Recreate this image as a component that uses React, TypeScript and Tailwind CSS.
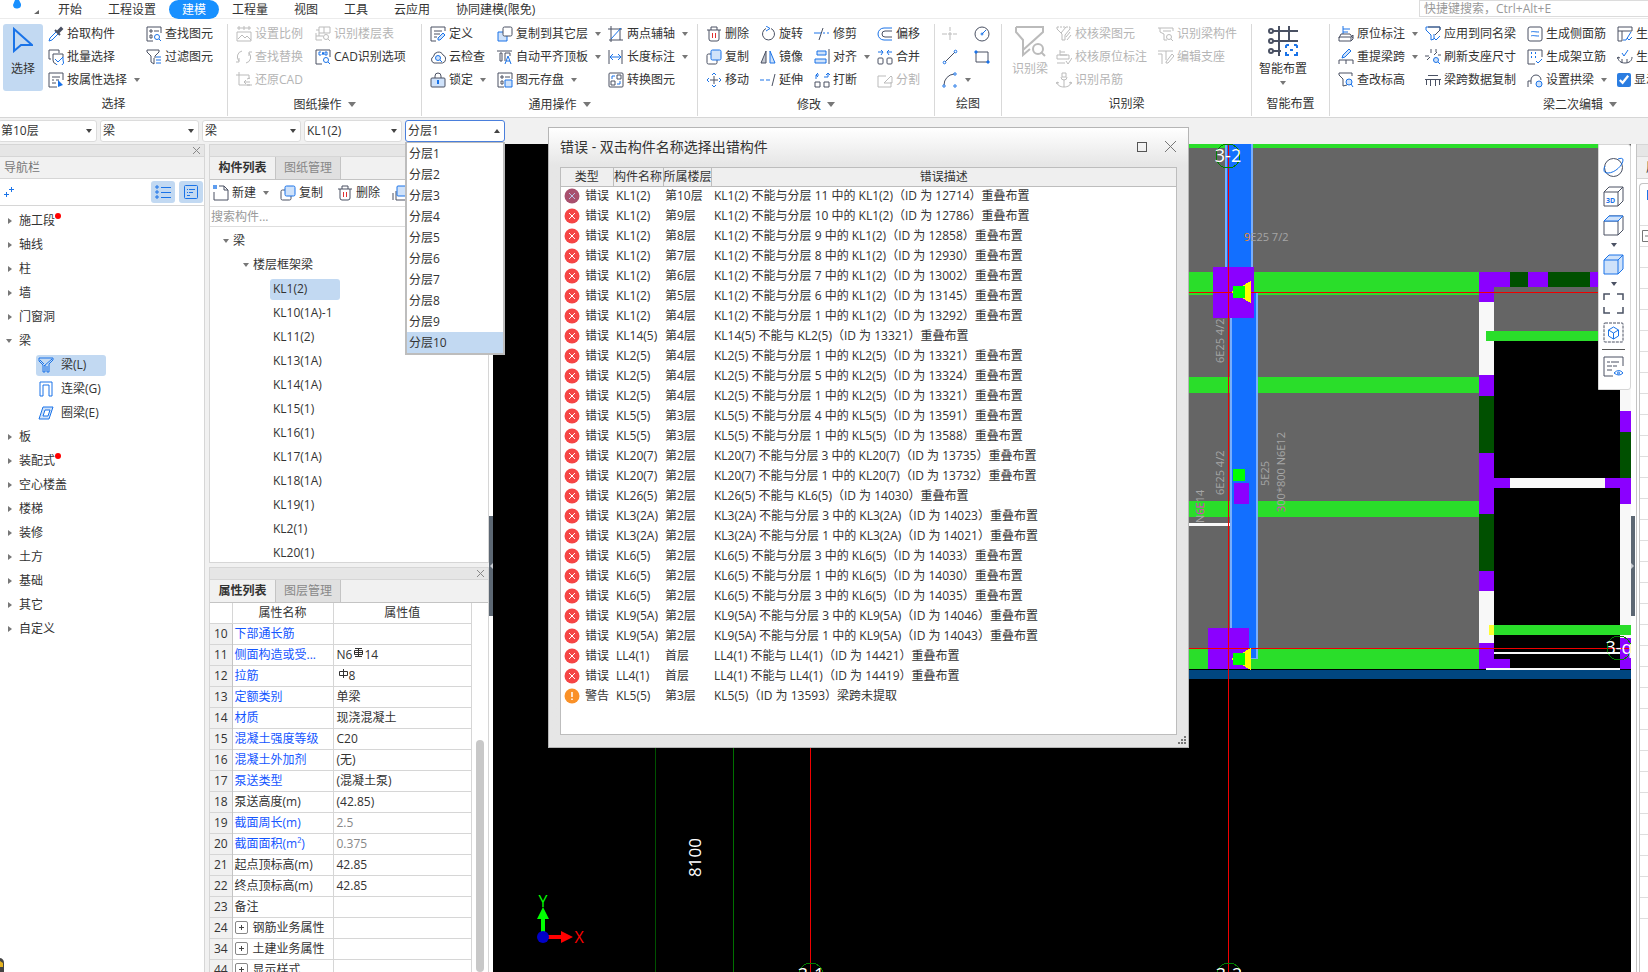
import { useState } from "react";
import type { ReactNode } from "react";
import clsx from "clsx";

const BLUE = "#1a73e8";
const PALE = "#cfe2fa";

const icons: Record<string, ReactNode> = {
  pick: (
    <>
      <path d="M8 6L2 12l-1 3 3-1 6-6" stroke={BLUE} />
      <path d="M10 5l3-3 1 1-3 3z" fill="currentColor" strokeWidth="2" />
      <path d="M7 4l5 5" strokeWidth="2" />
    </>
  ),
  batch: (
    <>
      <path d="M3 10H1V1h10v3" />
      <path d="M15 8V5H5v6a4 4 0 0 0 3 4" />
      <path d="M15 8v3a4 4 0 0 1-7 4M7 10l3 3 5-5" stroke={BLUE} />
    </>
  ),
  byProp: (
    <>
      <path d="M9 15H1V1h14v7M4 5h8M4 8h2M8 8h3M4 11h4" />
      <path d="M10 8l5 5-5 2z" fill={BLUE} stroke="none" />
    </>
  ),
  find: (
    <>
      <path d="M7 15H1V1h14v6M4 4h2v2H4zM8 5h5M4 9h2v3H4z" />
      <circle cx="11" cy="11" r="2.5" stroke={BLUE} />
      <path d="M13 13l2 2" stroke={BLUE} />
    </>
  ),
  filter: (
    <>
      <path d="M1 1h12v2L9 7v2M1 1v2l4 4v6l3 2V9" />
      <path d="M10 8h5M10 11h5M10 14h5" stroke={BLUE} />
    </>
  ),
  scale: <path d="M1 2h14M3 0v4M8 0v4M13 0v4M1 6h14v9H1zM2 13l4-4 3 3 2-2 4 4" />,
  floors: (
    <>
      <path d="M4 1v9M1 4h3M4 1h11v6H4M9 1v6M1 10h7M1 7v7h6" />
      <circle cx="11" cy="11" r="2.5" />
      <path d="M13 13l2 2" />
    </>
  ),
  replace: <path d="M6 2a6 6 0 0 0-3 10M3 9v4H0M10 14a6 6 0 0 0 3-10M13 7V3h3" />,
  cad: (
    <>
      <path d="M7 15H1V1h14v7" />
      <path d="M6 3H4v3h2M7 6l1-3 1 3M10 3h2v3h-2z" stroke={BLUE} />
      <circle cx="11" cy="11" r="2.5" stroke={BLUE} />
      <path d="M13 13l2 2" stroke={BLUE} />
    </>
  ),
  restore: <path d="M3 0v13h13M0 3h13v4M8 10h6M10 8l-2 2 2 2M11 7l3-1M11 13h3" />,
  define: (
    <>
      <path d="M6 15H1V1h14v4M4 5h8M4 8h6M4 11h3" />
      <path d="M8 12l5-5 2 2-5 5H8z" fill={PALE} stroke={BLUE} />
    </>
  ),
  copyFloor: (
    <>
      <path d="M6 6H1v9h9v-5" fill={PALE} stroke={BLUE} />
      <rect x="6" y="1" width="9" height="9" rx="1.5" fill="white" />
    </>
  ),
  axis: (
    <>
      <path d="M3 0v16M0 3h14M1 14h14M12 2v12" />
      <path d="M3 13L13 2" stroke={BLUE} />
    </>
  ),
  cloud: (
    <>
      <path d="M4 14a3.5 3.5 0 0 1-.5-6.500A5 5 0 0 1 13 6a4.200 4.200 0 0 1-.5 8z" />
      <circle cx="8" cy="9" r="2.500" stroke={BLUE} fill={PALE} />
      <path d="M10 11l2 2" stroke={BLUE} />
    </>
  ),
  alignTop: (
    <>
      <path d="M0 2h15M3 4v8h2V4zM8 12V4h5v3" />
      <path d="M8 15l3-8 3 8M9 12h4" stroke={BLUE} />
    </>
  ),
  length: (
    <>
      <path d="M1 1v14M14 1v14" />
      <path d="M2 8h11M5 5L2 8l3 3M10 5l3 3-3 3" stroke={BLUE} />
    </>
  ),
  lock: (
    <>
      <path d="M5 6V4a3 3 0 0 1 6 0v2" />
      <rect x="1" y="6" width="14" height="9" rx="1" fill={PALE} />
      <path d="M8 8v4" stroke={BLUE} strokeWidth="2" />
    </>
  ),
  save: (
    <>
      <path d="M7 15H1V1h14v6M4 4h2v2H4zM8 5h5M4 9h2v3H4z" />
      <path d="M8 8h7v7H8z" fill={PALE} stroke={BLUE} />
    </>
  ),
  convert: (
    <>
      <rect x="1" y="1" width="14" height="14" rx="1" />
      <path d="M9 3h4v4H9zM3 9h4v4H3z" />
      <path d="M4 7V4h3M12 9v3H9" stroke={BLUE} />
    </>
  ),
  trash: (
    <>
      <path d="M1 4h14M5 4V1h6v3M3 4v9a2 2 0 0 0 2 2h6a2 2 0 0 0 2-2V4" />
      <path d="M6.500 7v5M9.500 7v5" stroke="#e03131" />
    </>
  ),
  copy: (
    <>
      <rect x="1" y="5" width="10" height="10" rx="1.500" />
      <rect x="5" y="1" width="10" height="10" rx="1.500" fill={PALE} stroke={BLUE} />
    </>
  ),
  move: (
    <>
      <path d="M8 4v8M4 8h8" />
      <path d="M6 3l2-2 2 2M6 13l2 2 2-2M3 6L1 8l2 2M13 6l2 2-2 2" stroke={BLUE} />
    </>
  ),
  rotate: (
    <>
      <path d="M6 2.500a6 6 0 1 0 5 0" />
      <path d="M6 0l4 2.500-4 2.500" stroke={BLUE} />
    </>
  ),
  mirror: (
    <>
      <path d="M6 2v12H1z" fill="#c4c8d0" />
      <path d="M10 2v12h5z" stroke={BLUE} fill={PALE} />
    </>
  ),
  extend: (
    <>
      <path d="M15 2l-3 12" />
      <path d="M0 8h4M6 8h4" stroke={BLUE} />
    </>
  ),
  trim: (
    <>
      <path d="M9 2L5 14" />
      <path d="M0 7h7" stroke={BLUE} />
      <path d="M9 7h2M13 7h2" stroke={BLUE} />
    </>
  ),
  align: (
    <>
      <path d="M15 0v15" />
      <path d="M3 2h9v4H3zM1 10h11v4H1z" stroke={BLUE} fill={PALE} />
    </>
  ),
  breakUp: (
    <>
      <path d="M1 10h5v5H1zM10 10h5v5h-5z" />
      <path d="M2 7V3h3M4 1L2 3l2 2M10 5h4V2M12 3l2-2 2 2" stroke={BLUE} />
    </>
  ),
  offset: (
    <>
      <path d="M15 2H7a6 6 0 0 0 0 12h8" stroke={BLUE} />
      <path d="M15 5H8a3 3 0 0 0 0 6h7" />
    </>
  ),
  merge: (
    <>
      <rect x="1" y="9" width="5" height="6" rx="1" />
      <rect x="10" y="9" width="5" height="6" rx="1" />
      <path d="M1 3h5M4 1l2 2-2 3M15 3h-5M12 1l-2 2 2 3" stroke={BLUE} />
    </>
  ),
  split: <path d="M9 4H1v11h13v-5M7 11l7-7 1 1v6z" />,
  point: <path d="M8 1v4M8 10v4M0 8h5M11 8h4M7 7h2v2H7z" />,
  circle: (
    <>
      <circle cx="8" cy="8" r="7" />
      <path d="M8 8l4-4" stroke={BLUE} />
      <circle cx="8" cy="8" r="1" stroke={BLUE} />
    </>
  ),
  line: (
    <>
      <path d="M3 13L13 3" />
      <circle cx="2.500" cy="13.500" r="1.300" stroke={BLUE} />
      <circle cx="13.500" cy="2.500" r="1.300" stroke={BLUE} />
    </>
  ),
  rect: (
    <>
      <path d="M2 3h12v10H2z" />
      <path d="M1 2h2v2H1zM13 12h2v2h-2z" stroke={BLUE} fill={BLUE} />
    </>
  ),
  arc: (
    <>
      <path d="M2 13A11 11 0 0 1 12 2" />
      <circle cx="2" cy="14" r="1.200" stroke={BLUE} />
      <circle cx="13" cy="2" r="1.200" stroke={BLUE} />
      <circle cx="13" cy="14" r="1.200" stroke={BLUE} />
    </>
  ),
  checkBeam: (
    <>
      <path d="M1 1h13" strokeDasharray="2 1" />
      <path d="M1 1v2l5 5v6h3V9l5-6V1M10 1L5 7M14 6l-4 5M15 9l-4 5" />
    </>
  ),
  checkMark: <path d="M4 1v5h7M4 3h5M1 6h12v4H1zM1 14h8M10 12l2 3 4-6" />,
  hanger: (
    <path d="M8 8v7M6 1h4v4H6zM5 5a3 3 0 0 0 3 3 3 3 0 0 0 3-3M1 10c0 3 3 5 7 5s7-2 7-5M0 12l1-2 2 1M16 12l-1-2-2 1" />
  ),
  beamPart: (
    <>
      <path d="M0 2h15v3M2 2v4l4 2v6h3M5 5h8" />
      <circle cx="11" cy="11" r="2.500" />
      <path d="M13 13l2 2" />
    </>
  ),
  support: <path d="M0 2h15M0 5h4v10M8 2v9M8 13l6-8 2 2-6 7H8z" />,
  mark: (
    <>
      <path d="M5 8V0M5 3h7M5 6h5" stroke={BLUE} />
      <path d="M1 12l2-4h9l3 4M1 11h12v4H1zM13 11l2-2v4l-2 2" />
    </>
  ),
  respan: (
    <>
      <path d="M1 15v-4h14v4M8 11v4" />
      <path d="M4 9l1-3 6-6 2 2-6 6z" fill={PALE} stroke={BLUE} />
    </>
  ),
  elevation: (
    <>
      <path d="M1 1h13v3M1 1v2l4 4v7l4-1" />
      <circle cx="11" cy="10" r="3" stroke={BLUE} fill={PALE} />
      <path d="M13 12l2 3" stroke={BLUE} />
    </>
  ),
  applyBeam: (
    <>
      <path d="M1 1h14v3l-3 3M1 1v3l5 5v5l3-1V8" stroke={BLUE} />
      <path d="M3 1h12v3l-5 5" />
      <path d="M9 12l2 2 4-4" stroke={BLUE} />
    </>
  ),
  refresh: (
    <>
      <path d="M0 7h4M6 0v4M12 3L9 6M2 11l3-3M11 0v3M13 6h3" />
      <circle cx="11" cy="11" r="2.500" stroke={BLUE} fill={PALE} />
      <path d="M13 13l2 2" stroke={BLUE} />
    </>
  ),
  spanCopy: <path d="M3 3.500h10M0 7.500h16M1.500 8v5M5.500 8v6M10.500 8v6M14.500 8v5" />,
  sideBar: (
    <>
      <rect x="1" y="1" width="14" height="14" rx="2" />
      <path d="M4 6c2-1 3 0 8 0M4 10c2-1 3 0 8 0" stroke={BLUE} />
    </>
  ),
  topBar: (
    <>
      <path d="M8 15H1V1h14v7" />
      <path d="M4 4h1M8 4h1M4 8h1M8 8h1" stroke={BLUE} strokeWidth="2" />
      <path d="M9 12l2 2 4-4" stroke={BLUE} />
    </>
  ),
  arch: (
    <>
      <path d="M1 15v-6h3M4 12V8a5 5 0 0 1 10 0" />
      <circle cx="12" cy="12" r="3" stroke={BLUE} fill={PALE} />
    </>
  ),
  genA: (
    <>
      <path d="M1 1h14v4H1zM1 5v10h4V5" />
      <path d="M6 14l3 0 5-8M10 12l2 2 3-3" stroke={BLUE} />
    </>
  ),
  genB: (
    <>
      <path d="M1 8c0 4 3 6 7 6s7-2 7-6M0 10l1-2 2 1M5 10v4M10 10v4" />
      <path d="M5 4l2 3 4-6" stroke={BLUE} />
    </>
  ),
  newDoc: (
    <>
      <path d="M6 1h5l4 4v10H1V7M11 1v4h4" />
      <path d="M0 0h4v4H0z" fill={BLUE} stroke="none" opacity="0.7" />
    </>
  ),
  layers: (
    <>
      <path d="M4 6v9h9M1 8v7" />
      <rect x="5" y="1" width="10" height="10" rx="1" fill={PALE} stroke={BLUE} />
    </>
  ),
  beam: <path d="M1 1h14v2l-4 4v8H9V9M1 1v3l4 4v7h2V8M2 3l4 4M14 2L6 9" stroke={BLUE} />,
  linkBeam: <path d="M2 15V1h12v14h-3V4H5v11z" stroke={BLUE} />,
  ringBeam: <path d="M5 2h10l-4 12H1zM7 5h5l-2 6H5z" stroke={BLUE} fill={PALE} fillRule="evenodd" />,
};

function Icon({ name, className }: { name: string; className?: string }) {
  return (
    <svg
      viewBox="0 0 16 16"
      fill="none"
      stroke="currentColor"
      className={clsx("h-4 w-4 shrink-0", className)}
    >
      {icons[name]}
    </svg>
  );
}

function Caret({ up, className }: { up?: boolean; className?: string }) {
  return (
    <svg viewBox="0 0 6 4" className={clsx("h-1 w-1.5 shrink-0", className)}>
      <path d={up ? "M0 4L3 0l3 4z" : "M0 0h6L3 4z"} fill="currentColor" />
    </svg>
  );
}

interface ToolDef {
  icon: string;
  text?: string;
  arrow?: boolean;
  off?: boolean;
}

function Tool({ icon, text, arrow, off }: ToolDef) {
  return (
    <button
      type="button"
      disabled={off}
      aria-label={text ?? icon}
      className={clsx(
        "flex h-[23px] items-center gap-[3px] whitespace-nowrap",
        off ? "text-[#b5b5b5]" : "text-[#333]"
      )}
    >
      <Icon name={icon} className={off ? "text-[#bbb]" : "text-[#4a5163]"} />
      {text}
      {arrow && <Caret className="ml-1 text-[#777]" />}
    </button>
  );
}

function Tools({ items, className }: { items: ToolDef[]; className: string }) {
  return (
    <div className={clsx("shrink-0", className)}>
      {items.map((t) => (
        <Tool key={t.icon} {...t} />
      ))}
    </div>
  );
}

interface GroupProps {
  label: string;
  more?: boolean;
  className: string;
  children: ReactNode;
}

function Group({ label, more, className, children }: GroupProps) {
  return (
    <section className={clsx("flex shrink-0 flex-col", className)}>
      <div className="flex h-[71px]">{children}</div>
      <div
        className={clsx(
          "flex items-center justify-center gap-1.5 whitespace-nowrap",
          more ? "h-[23px] pr-2" : "h-[27px]"
        )}
      >
        {label}
        {more && (
          <svg viewBox="0 0 8 5" className="h-[5px] w-2 shrink-0" fill="#777">
            <path d="M0 0h8L4 5z" />
          </svg>
        )}
      </div>
    </section>
  );
}

function Divider() {
  return <div className="mt-0.5 h-[92px] w-px shrink-0 bg-[#d9d9d9]" />;
}

const MENUS = ["开始", "工程设置", "建模", "工程量", "视图", "工具", "云应用", "协同建模(限免)"];

function MenuBar() {
  return (
    <header className="flex h-[19px] shrink-0 items-start border-b border-[#ececec] bg-white">
      <div className="flex w-[45px] shrink-0 pl-3">
        <svg viewBox="0 0 10 11" className="h-[11px] w-2.5">
          <path d="M3 0h4l2 4a4 4 0 1 1-8 1z" fill="#1890ff" />
        </svg>
        <svg viewBox="0 0 5 4" className="mt-2.5 ml-3 h-1 w-[5px]">
          <path d="M5 0v4H0z" fill="#666" />
        </svg>
      </div>
      <nav className="flex">
        {MENUS.map((m) => (
          <button
            key={m}
            type="button"
            className={clsx(
              "h-[19px] px-[13px] whitespace-nowrap",
              m === "建模" && "rounded-full bg-[#1890ff] text-white"
            )}
          >
            {m}
          </button>
        ))}
      </nav>
      <div className="ml-auto w-[229px] overflow-hidden">
        <input
          aria-label="快捷键搜索"
          placeholder="快捷键搜索，Ctrl+Alt+E"
          className="h-[17px] w-[260px] border border-[#dcdcdc] px-1 placeholder:text-[#999]"
        />
      </div>
    </header>
  );
}

function Ribbon() {
  return (
    <div className="flex h-[99px] shrink-0 overflow-hidden border-b border-[#d6d6d6] bg-white pt-[3px]">
      <Group label="选择" className="w-[227px]">
        <button
          type="button"
          className="mt-0.5 mr-[5px] ml-[3px] flex h-[67px] w-10 shrink-0 flex-col items-center rounded-[3px] bg-[#c2d9f2]"
        >
          <svg viewBox="0 0 20 26" className="mt-[3px] h-[26px] w-5" fill="none" stroke={BLUE} strokeWidth="2">
            <path d="M1 2v22l7-6h11z" />
          </svg>
          <span className="mt-2">选择</span>
        </button>
        <Tools
          className="w-[98px]"
          items={[
            { icon: "pick", text: "拾取构件" },
            { icon: "batch", text: "批量选择" },
            { icon: "byProp", text: "按属性选择", arrow: true },
          ]}
        />
        <Tools
          className="w-[70px]"
          items={[
            { icon: "find", text: "查找图元" },
            { icon: "filter", text: "过滤图元" },
          ]}
        />
      </Group>
      <Divider />
      <Group label="图纸操作" more className="w-[193px] pl-2">
        <Tools
          className="w-[79px]"
          items={[
            { icon: "scale", text: "设置比例", off: true },
            { icon: "replace", text: "查找替换", off: true },
            { icon: "restore", text: "还原CAD", off: true },
          ]}
        />
        <Tools
          className="w-[100px]"
          items={[
            { icon: "floors", text: "识别楼层表", off: true },
            { icon: "cad", text: "CAD识别选项" },
          ]}
        />
      </Group>
      <Divider />
      <Group label="通用操作" more className="w-[275px] pl-2">
        <Tools
          className="w-[67px]"
          items={[
            { icon: "define", text: "定义" },
            { icon: "cloud", text: "云检查" },
            { icon: "lock", text: "锁定", arrow: true },
          ]}
        />
        <Tools
          className="w-[111px]"
          items={[
            { icon: "copyFloor", text: "复制到其它层", arrow: true },
            { icon: "alignTop", text: "自动平齐顶板", arrow: true },
            { icon: "save", text: "图元存盘", arrow: true },
          ]}
        />
        <Tools
          className="w-[85px]"
          items={[
            { icon: "axis", text: "两点辅轴", arrow: true },
            { icon: "length", text: "长度标注", arrow: true },
            { icon: "convert", text: "转换图元" },
          ]}
        />
      </Group>
      <Divider />
      <Group label="修改" more className="w-[236px] pl-2">
        <Tools
          className="w-[54px]"
          items={[
            { icon: "trash", text: "删除" },
            { icon: "copy", text: "复制" },
            { icon: "move", text: "移动" },
          ]}
        />
        <Tools
          className="w-[54px]"
          items={[
            { icon: "rotate", text: "旋转" },
            { icon: "mirror", text: "镜像" },
            { icon: "extend", text: "延伸" },
          ]}
        />
        <Tools
          className="w-[63px]"
          items={[
            { icon: "trim", text: "修剪" },
            { icon: "align", text: "对齐", arrow: true },
            { icon: "breakUp", text: "打断" },
          ]}
        />
        <Tools
          className="w-[50px]"
          items={[
            { icon: "offset", text: "偏移" },
            { icon: "merge", text: "合并" },
            { icon: "split", text: "分割", off: true },
          ]}
        />
      </Group>
      <Divider />
      <Group label="绘图" className="w-[66px] px-[7px]">
        <Tools
          className="w-8"
          items={[{ icon: "point", off: true }, { icon: "line" }, { icon: "arc", arrow: true }]}
        />
        <Tools className="w-5" items={[{ icon: "circle" }, { icon: "rect" }]} />
      </Group>
      <Divider />
      <Group label="识别梁" className="w-[249px]">
        <button
          type="button"
          disabled
          className="mr-2 ml-2.5 flex w-9 shrink-0 flex-col items-center whitespace-nowrap text-[#b5b5b5]"
        >
          <svg viewBox="0 0 32 32" className="mt-[3px] h-8 w-8" fill="none" stroke="#bbb" strokeWidth="2">
            <path d="M2 2h27v5L17 18M2 2v5l7 8v15l7-6M29 7L9 25" />
            <circle cx="24" cy="24" r="5" />
            <path d="M27 27l4 4" />
          </svg>
          <span className="mt-1">识别梁</span>
        </button>
        <Tools
          className="w-[102px]"
          items={[
            { icon: "checkBeam", text: "校核梁图元", off: true },
            { icon: "checkMark", text: "校核原位标注", off: true },
            { icon: "hanger", text: "识别吊筋", off: true },
          ]}
        />
        <Tools
          className="w-[82px]"
          items={[
            { icon: "beamPart", text: "识别梁构件", off: true },
            { icon: "support", text: "编辑支座", off: true },
          ]}
        />
      </Group>
      <Divider />
      <Group label="智能布置" className="w-[77px]">
        <button type="button" className="ml-[7px] flex w-12 shrink-0 flex-col items-center whitespace-nowrap">
          <svg viewBox="0 0 32 32" className="mt-[3px] h-8 w-8" fill="none" stroke="#4a5163" strokeWidth="2">
            <path d="M5 6h26M5 16h26M5 26h9M12 1v30M22 1v15" />
            <g fill="white">
              <circle cx="4" cy="6" r="2" />
              <circle cx="4" cy="16" r="2" />
              <circle cx="4" cy="26" r="2" />
            </g>
            <rect x="17" y="18" width="15" height="14" fill="white" stroke="none" />
            <path d="M22 20h-2l-1 1v2M27 20h2l1 1v2M19 27v3h3M30 27v3h-3M23 25h3" stroke={BLUE} />
          </svg>
          <span className="mt-1">智能布置</span>
          <Caret className="mt-1 text-[#777]" />
        </button>
      </Group>
      <Divider />
      <Group label="梁二次编辑" more className="w-[500px] pl-2">
        <Tools
          className="w-[87px]"
          items={[
            { icon: "mark", text: "原位标注", arrow: true },
            { icon: "respan", text: "重提梁跨", arrow: true },
            { icon: "elevation", text: "查改标高" },
          ]}
        />
        <Tools
          className="w-[102px]"
          items={[
            { icon: "applyBeam", text: "应用到同名梁" },
            { icon: "refresh", text: "刷新支座尺寸" },
            { icon: "spanCopy", text: "梁跨数据复制" },
          ]}
        />
        <Tools
          className="w-[90px]"
          items={[
            { icon: "sideBar", text: "生成侧面筋" },
            { icon: "topBar", text: "生成架立筋" },
            { icon: "arch", text: "设置拱梁", arrow: true },
          ]}
        />
        <div className="w-[120px] shrink-0">
          <Tool icon="genA" text="生成梁加腋" />
          <Tool icon="genB" text="生成吊筋" />
          <label className="flex h-[23px] items-center gap-[3px] whitespace-nowrap">
            <input type="checkbox" defaultChecked className="h-3.5 w-3.5 accent-[#2b7de1]" />
            显示吊筋
          </label>
        </div>
      </Group>
    </div>
  );
}

const LAYERS = Array.from({ length: 10 }, (_, i) => `分层${i + 1}`);

interface PickerProps {
  label: string;
  options: string[];
  open?: boolean;
  className: string;
}

function Picker({ label, options, open, className }: PickerProps) {
  const [value, setValue] = useState(options[0]);
  return (
    <div className={clsx("relative shrink-0", className)}>
      <select
        aria-label={label}
        value={value}
        onChange={(e) => setValue(e.target.value)}
        className={clsx(
          "h-[22px] w-full appearance-none rounded-[3px] border bg-white px-0.5 leading-5",
          open ? "border-[#4a7fdc]" : "border-[#dcdcdc]"
        )}
      >
        {options.map((o) => (
          <option key={o}>{o}</option>
        ))}
      </select>
      <Caret up={open} className="pointer-events-none absolute top-[9px] right-[5px] text-[#444]" />
      {open && (
        <ul
          role="listbox"
          aria-label={label}
          className="absolute top-[22px] left-0 z-20 w-full border-2 border-t border-[#bdbdbd] bg-white"
        >
          {options.map((o, i) => (
            <li
              key={o}
              role="option"
              aria-selected={o === value}
              className={clsx(
                "h-[21px] px-0.5 leading-[21px]",
                i === options.length - 1 && "bg-[#c2d9f2]"
              )}
            >
              {o}
            </li>
          ))}
        </ul>
      )}
    </div>
  );
}

function ContextBar() {
  return (
    <div className="flex h-[26px] shrink-0 gap-[3px] bg-[#f1f1f1] pt-0.5">
      <Picker label="楼层" options={["第10层"]} className="-ml-0.5 w-[99px]" />
      <Picker label="构件大类" options={["梁"]} className="w-[99px]" />
      <Picker label="构件类型" options={["梁"]} className="w-[99px]" />
      <Picker label="构件" options={["KL1(2)"]} className="w-[98px]" />
      <Picker label="分层" options={LAYERS} open className="w-[100px]" />
    </div>
  );
}

function CaptionBar() {
  return (
    <div className="flex h-[13px] shrink-0 items-center justify-end border-y border-[#d6d6d6] bg-[#e6e6e6] pr-1">
      <button type="button" aria-label="关闭">
        <svg viewBox="0 0 7 7" className="h-[7px] w-[7px]" stroke="#888">
          <path d="M0 0l7 7M7 0L0 7" />
        </svg>
      </button>
    </div>
  );
}

function TreeArrow({ open }: { open?: boolean }) {
  return (
    <svg viewBox="0 0 8 8" className="h-2 w-2 shrink-0" fill="#777">
      <path d={open ? "M1 2h6L4 6z" : "M3 1l4 3-4 3z"} />
    </svg>
  );
}

const NAV_ITEMS: { text: string; dot?: boolean; children?: [string, string][] }[] = [
  { text: "施工段", dot: true },
  { text: "轴线" },
  { text: "柱" },
  { text: "墙" },
  { text: "门窗洞" },
  {
    text: "梁",
    children: [
      ["beam", "梁(L)"],
      ["linkBeam", "连梁(G)"],
      ["ringBeam", "圈梁(E)"],
    ],
  },
  { text: "板" },
  { text: "装配式", dot: true },
  { text: "空心楼盖" },
  { text: "楼梯" },
  { text: "装修" },
  { text: "土方" },
  { text: "基础" },
  { text: "其它" },
  { text: "自定义" },
];

function NavPanel() {
  return (
    <aside className="flex w-[205px] shrink-0 flex-col border-r border-[#d6d6d6] bg-white">
      <CaptionBar />
      <h2 className="h-[22px] shrink-0 border-b border-[#d6d6d6] bg-[#f1f1f1] px-1 leading-[21px] text-[#777]">
        导航栏
      </h2>
      <div className="flex h-[27px] shrink-0 items-center gap-1 border-b border-[#d6d6d6] pr-px pl-1">
        <svg viewBox="0 0 10 10" className="mr-auto h-2.5 w-2.5" stroke={BLUE}>
          <path d="M0 7.500h5M2.500 5v5M5 2.500h5M7.500 0v5" />
        </svg>
        <button type="button" aria-label="列表" className="flex h-[22px] w-6 items-center justify-center rounded-[3px] bg-[#c2d9f2]">
          <svg viewBox="0 0 16 14" className="h-3.5 w-4" fill="none" stroke={BLUE}>
            <path d="M1 1h2v2H1zM1 6h2v2H1zM1 11h2v2H1zM6 2.500h10M6 7.500h10M6 12.500h10" />
          </svg>
        </button>
        <button type="button" aria-label="详情" className="flex h-[22px] w-6 items-center justify-center rounded-[3px] bg-[#c2d9f2]">
          <svg viewBox="0 0 16 16" className="h-4 w-4" fill="none" stroke={BLUE}>
            <rect x="1.500" y="1.500" width="13" height="13" rx="1" />
            <path d="M4 5.500h1M6 5.500h6M4 8.500h1M6 8.500h4M4 11.500h3" />
          </svg>
        </button>
      </div>
      <ul className="pt-[3px]">
        {NAV_ITEMS.map((n) => (
          <li key={n.text}>
            <div className="flex h-6 items-center gap-1.5 pl-[5px]">
              <TreeArrow open={!!n.children} />
              {n.text}
              {n.dot && <span className="-mt-2.5 -ml-1.5 h-1.5 w-1.5 rounded-full bg-[#ff0000]" />}
            </div>
            {n.children?.map(([icon, text], i) => (
              <div key={text} className="flex h-6 items-center pl-9">
                <button
                  type="button"
                  className={clsx(
                    "flex h-[21px] w-[70px] items-center gap-[7px] rounded-[3px] pl-0.5",
                    i === 0 && "bg-[#c2d9f2]"
                  )}
                >
                  <Icon name={icon} />
                  {text}
                </button>
              </div>
            ))}
          </li>
        ))}
      </ul>
      <svg viewBox="0 0 5 14" className="mt-auto h-3.5 w-[5px]">
        <path d="M0 0a5 5 0 0 1 4 5v9H0z" fill="#444" />
        <path d="M0 3l3 2v4H0z" fill="#e6b422" />
      </svg>
    </aside>
  );
}

function PanelTabs({ tabs }: { tabs: [string, string] }) {
  return (
    <div role="tablist" className="flex h-[23px] shrink-0 border-b border-[#c4c4c4] bg-[#f1f1f1]">
      <button role="tab" aria-selected="true" type="button" className="w-[65px] font-bold">
        {tabs[0]}
      </button>
      <button
        role="tab"
        aria-selected="false"
        type="button"
        className="w-[66px] border-x border-[#c4c4c4] bg-[#e0e0e0] text-[#888]"
      >
        {tabs[1]}
      </button>
    </div>
  );
}

const COMPONENTS = [
  "KL1(2)", "KL10(1A)-1", "KL11(2)", "KL13(1A)", "KL14(1A)", "KL15(1)",
  "KL16(1)", "KL17(1A)", "KL18(1A)", "KL19(1)", "KL2(1)", "KL20(1)",
];

function ComponentPanel() {
  return (
    <section className="flex h-[419px] shrink-0 flex-col overflow-hidden border-x border-b border-[#d6d6d6] bg-white">
      <CaptionBar />
      <PanelTabs tabs={["构件列表", "图纸管理"]} />
      <div className="flex h-[27px] shrink-0 items-center overflow-hidden border-b border-[#dedede] pl-[3px]">
        <Tools className="w-[67px]" items={[{ icon: "newDoc", text: "新建", arrow: true }]} />
        <Tools className="w-[57px]" items={[{ icon: "copy", text: "复制" }]} />
        <Tools className="w-[55px]" items={[{ icon: "trash", text: "删除" }]} />
        <Tools className="w-5" items={[{ icon: "layers" }]} />
      </div>
      <input
        aria-label="搜索构件"
        placeholder="搜索构件..."
        className="h-5 shrink-0 border-b border-[#dedede] px-px placeholder:text-[#999]"
      />
      <ul className="pt-0.5">
        <li className="flex h-6 items-center gap-[3px] pl-3">
          <TreeArrow open />梁
        </li>
        <li className="flex h-6 items-center gap-[3px] pl-8">
          <TreeArrow open />
          楼层框架梁
        </li>
        {COMPONENTS.map((c, i) => (
          <li key={c} className="flex h-6 items-center pl-[60px]">
            <span
              className={clsx(
                "h-[21px] w-[70px] rounded-[3px] px-[3px] leading-5 whitespace-nowrap",
                i === 0 && "bg-[#c2d9f2]"
              )}
            >
              {c}
            </span>
          </li>
        ))}
      </ul>
    </section>
  );
}

type Tone = "link" | "muted" | "group";

const PROPS: [number, string, ReactNode, Tone?][] = [
  [10, "下部通长筋", "", "link"],
  [11, "侧面构造或受...", <>N6<Rebar grade={3} />14</>, "link"],
  [12, "拉筋", <><Rebar grade={1} />8</>, "link"],
  [13, "定额类别", "单梁", "link"],
  [14, "材质", "现浇混凝土", "link"],
  [15, "混凝土强度等级", "C20", "link"],
  [16, "混凝土外加剂", "(无)", "link"],
  [17, "泵送类型", "(混凝土泵)", "link"],
  [18, "泵送高度(m)", "(42.85)"],
  [19, "截面周长(m)", "2.5", "muted"],
  [20, "截面面积(m²)", "0.375", "muted"],
  [21, "起点顶标高(m)", "42.85"],
  [22, "终点顶标高(m)", "42.85"],
  [23, "备注", ""],
  [24, "钢筋业务属性", "", "group"],
  [34, "土建业务属性", "", "group"],
  [44, "显示样式", "", "group"],
];

// steel grade mark: grade 1 has a single bar, grade 3 has three
function Rebar({ grade }: { grade: 1 | 3 }) {
  return (
    <svg viewBox="0 0 12 10" className="-mt-1 inline h-2.5 w-3" fill="none" stroke="#333">
      <path
        d={
          grade === 1
            ? "M2.500 2.500h8v4h-8zM6.500 0v9"
            : "M2.500 2.500h8v4h-8zM6.500 0v9M2.500 4.500h8M3 .5h7M3 8.500h7"
        }
      />
    </svg>
  );
}

function PropertyPanel() {
  return (
    <section className="mt-1 flex min-h-0 flex-1 flex-col overflow-hidden border-x border-[#d6d6d6] bg-white">
      <CaptionBar />
      <PanelTabs tabs={["属性列表", "图层管理"]} />
      <div className="flex min-h-0 flex-1 overflow-hidden">
        <div className="min-w-0 flex-1 overflow-hidden">
          <table className="w-full table-fixed border-collapse">
            <colgroup>
              <col className="w-[22px]" />
              <col className="w-[101px]" />
              <col />
            </colgroup>
            <thead>
              <tr className="h-5 border-b border-[#d6d6d6]">
                <th className="border-r border-[#d6d6d6]" />
                <th className="border-r border-[#d6d6d6] p-0 font-normal">属性名称</th>
                <th className="border-r border-[#d6d6d6] p-0 font-normal">属性值</th>
              </tr>
            </thead>
            <tbody>
              {PROPS.map(([no, name, value, tone]) => (
                <tr key={no} className="h-[21px] border-b border-[#d6d6d6] whitespace-nowrap">
                  <td className="border-r border-[#c4c4c4] bg-[#f1f1f1] p-0 text-center">{no}</td>
                  <td
                    className={clsx(
                      "border-r border-[#d6d6d6] p-0 pl-0.5",
                      (tone === "link" || tone === "muted") && "text-[#1456ff]"
                    )}
                  >
                    {tone === "group" ? (
                      <span className="flex items-center gap-[5px]">
                        <button
                          type="button"
                          aria-label={`展开${name}`}
                          className="flex h-[13px] w-[13px] items-center justify-center rounded-[2px] border border-[#888]"
                        >
                          <svg viewBox="0 0 5 5" className="h-[5px] w-[5px]" stroke="#444">
                            <path d="M0 2.500h5M2.500 0v5" />
                          </svg>
                        </button>
                        {name}
                      </span>
                    ) : (
                      name
                    )}
                  </td>
                  <td
                    className={clsx(
                      "border-r border-[#d6d6d6] p-0 pl-[3px]",
                      tone === "muted" && "text-[#888]"
                    )}
                  >
                    {value}
                  </td>
                </tr>
              ))}
            </tbody>
          </table>
        </div>
        <div className="w-4 shrink-0 px-1 pt-[137px]">
          <div className="h-full rounded-full bg-[#c8c8c8]" />
        </div>
      </div>
    </section>
  );
}

type ErrorRow = [name: string, floor: string, text: string];

const ERRORS: ErrorRow[] = [
  ["KL1(2)", "第10层", "KL1(2) 不能与分层 11 中的 KL1(2)（ID 为 12714）重叠布置"],
  ["KL1(2)", "第9层", "KL1(2) 不能与分层 10 中的 KL1(2)（ID 为 12786）重叠布置"],
  ["KL1(2)", "第8层", "KL1(2) 不能与分层 9 中的 KL1(2)（ID 为 12858）重叠布置"],
  ["KL1(2)", "第7层", "KL1(2) 不能与分层 8 中的 KL1(2)（ID 为 12930）重叠布置"],
  ["KL1(2)", "第6层", "KL1(2) 不能与分层 7 中的 KL1(2)（ID 为 13002）重叠布置"],
  ["KL1(2)", "第5层", "KL1(2) 不能与分层 6 中的 KL1(2)（ID 为 13145）重叠布置"],
  ["KL1(2)", "第4层", "KL1(2) 不能与分层 1 中的 KL1(2)（ID 为 13292）重叠布置"],
  ["KL14(5)", "第4层", "KL14(5) 不能与 KL2(5)（ID 为 13321）重叠布置"],
  ["KL2(5)", "第4层", "KL2(5) 不能与分层 1 中的 KL2(5)（ID 为 13321）重叠布置"],
  ["KL2(5)", "第4层", "KL2(5) 不能与分层 5 中的 KL2(5)（ID 为 13324）重叠布置"],
  ["KL2(5)", "第4层", "KL2(5) 不能与分层 1 中的 KL2(5)（ID 为 13321）重叠布置"],
  ["KL5(5)", "第3层", "KL5(5) 不能与分层 4 中的 KL5(5)（ID 为 13591）重叠布置"],
  ["KL5(5)", "第3层", "KL5(5) 不能与分层 1 中的 KL5(5)（ID 为 13588）重叠布置"],
  ["KL20(7)", "第2层", "KL20(7) 不能与分层 3 中的 KL20(7)（ID 为 13735）重叠布置"],
  ["KL20(7)", "第2层", "KL20(7) 不能与分层 1 中的 KL20(7)（ID 为 13732）重叠布置"],
  ["KL26(5)", "第2层", "KL26(5) 不能与 KL6(5)（ID 为 14030）重叠布置"],
  ["KL3(2A)", "第2层", "KL3(2A) 不能与分层 3 中的 KL3(2A)（ID 为 14023）重叠布置"],
  ["KL3(2A)", "第2层", "KL3(2A) 不能与分层 1 中的 KL3(2A)（ID 为 14021）重叠布置"],
  ["KL6(5)", "第2层", "KL6(5) 不能与分层 3 中的 KL6(5)（ID 为 14033）重叠布置"],
  ["KL6(5)", "第2层", "KL6(5) 不能与分层 1 中的 KL6(5)（ID 为 14030）重叠布置"],
  ["KL6(5)", "第2层", "KL6(5) 不能与分层 3 中的 KL6(5)（ID 为 14035）重叠布置"],
  ["KL9(5A)", "第2层", "KL9(5A) 不能与分层 3 中的 KL9(5A)（ID 为 14046）重叠布置"],
  ["KL9(5A)", "第2层", "KL9(5A) 不能与分层 1 中的 KL9(5A)（ID 为 14043）重叠布置"],
  ["LL4(1)", "首层", "LL4(1) 不能与 LL4(1)（ID 为 14421）重叠布置"],
  ["LL4(1)", "首层", "LL4(1) 不能与 LL4(1)（ID 为 14419）重叠布置"],
  ["KL5(5)", "第3层", "KL5(5)（ID 为 13593）梁跨未提取"],
];

function ErrorDialog() {
  return (
    <div
      role="dialog"
      aria-label="错误"
      className="absolute -top-[17px] left-[55px] z-10 flex h-[621px] w-[641px] flex-col border border-[#b5b5b5] bg-[#e6e6e6] bg-linear-to-b from-white via-[#e6e6e6] via-6% to-[#e6e6e6] px-[11px] pb-3"
    >
      <div className="flex h-[39px] shrink-0 items-center pb-0.5">
        <h2 className="mr-auto text-sm">错误 - 双击构件名称选择出错构件</h2>
        <button type="button" aria-label="最大化" className="mr-[18px] h-2.5 w-2.5 border border-[#555]" />
        <button type="button" aria-label="关闭" className="mr-px">
          <svg viewBox="0 0 11 11" className="h-[11px] w-[11px]" stroke="#777">
            <path d="M0 0l11 11M11 0L0 11" />
          </svg>
        </button>
      </div>
      <div className="min-h-0 flex-1 overflow-hidden border border-[#bdbdbd] bg-white">
        <table className="w-full table-fixed border-collapse">
          <colgroup>
            <col className="w-[52px]" />
            <col className="w-[50px]" />
            <col className="w-[48px]" />
            <col />
          </colgroup>
          <thead>
            <tr className="h-[18px] border-b border-[#bdbdbd] bg-[#efefef] leading-4 whitespace-nowrap">
              <th className="border-r border-[#bdbdbd] p-0 font-normal">类型</th>
              <th className="border-r border-[#bdbdbd] p-0 font-normal">构件名称</th>
              <th className="border-r border-[#bdbdbd] p-0 font-normal">所属楼层</th>
              <th className="p-0 font-normal">错误描述</th>
            </tr>
          </thead>
          <tbody>
            {ERRORS.map(([name, floor, text], i) => {
              const warn = i === ERRORS.length - 1;
              return (
                <tr key={i} className="h-5 whitespace-nowrap">
                  <td className="p-0 pl-[3px]">
                    <span className="flex items-center gap-[5px]">
                      <svg viewBox="0 0 16 16" className="h-4 w-4 shrink-0" stroke="white" fill="none">
                        <circle
                          cx="8"
                          cy="8"
                          r="7.500"
                          stroke="none"
                          fill={warn ? "#fa9128" : i === 0 ? "#a8506e" : "#f54545"}
                        />
                        {warn ? (
                          <path d="M8 4v5M8 10.500v1.500" strokeWidth="1.500" />
                        ) : (
                          <path d="M5 5l6 6M11 5l-6 6" stroke={i === 0 ? "#b9c4e6" : "white"} />
                        )}
                      </svg>
                      {warn ? "警告" : "错误"}
                    </span>
                  </td>
                  <td className="p-0 pl-[3px]">{name}</td>
                  <td className="p-0 pl-0.5">{floor}</td>
                  <td className="p-0 pl-[3px]">{text}</td>
                </tr>
              );
            })}
          </tbody>
        </table>
      </div>
      <svg viewBox="0 0 8 8" className="absolute right-0.5 bottom-[3px] h-2 w-2" fill="#777">
        <path d="M6 0h2v2H6zM3 3h2v2H3zM6 3h2v2H6zM0 6h2v2H0zM3 6h2v2H3zM6 6h2v2H6z" />
      </svg>
    </div>
  );
}

const VIOLET = "#8b00ff";
const GREEN = "#2ade2a";
const FOREST = "#005000";
const WALL = "#f8f8f8";

// [x, y, width, height, fill], painted in order
const SHAPES: [number, number, number, number, string][] = [
  [507, 0, 631, 525, "#656565"],
  [507, 0, 598, 4, GREEN],
  [507, 128, 479, 23, GREEN],
  [507, 233, 479, 16, GREEN],
  [507, 357, 487, 16, GREEN],
  [507, 505, 479, 20, GREEN],
  [507, 379, 231, 3, WALL],
  [1001, 197, 126, 328, "#000000"],
  [986, 128, 31, 15, VIOLET],
  [1017, 128, 18, 15, FOREST],
  [1035, 128, 20, 15, VIOLET],
  [1055, 128, 42, 15, FOREST],
  [1097, 128, 10, 15, VIOLET],
  [986, 143, 15, 15, VIOLET],
  [986, 158, 15, 73, WALL],
  [986, 231, 15, 21, VIOLET],
  [986, 252, 15, 57, FOREST],
  [986, 309, 15, 61, VIOLET],
  [986, 370, 15, 57, FOREST],
  [986, 427, 15, 20, VIOLET],
  [986, 447, 15, 52, WALL],
  [986, 499, 15, 26, VIOLET],
  [1001, 515, 16, 10, VIOLET],
  [993, 187, 145, 10, GREEN],
  [1127, 197, 11, 70, WALL],
  [1127, 267, 11, 21, VIOLET],
  [1127, 288, 11, 46, FOREST],
  [1001, 334, 16, 10, VIOLET],
  [1017, 334, 95, 10, WALL],
  [1112, 334, 26, 10, VIOLET],
  [1127, 344, 11, 16, VIOLET],
  [1127, 360, 11, 134, WALL],
  [1127, 494, 11, 31, VIOLET],
  [1001, 481, 137, 10, GREEN],
  [996, 481, 5, 10, "#ffff30"],
  [1001, 508, 126, 2, WALL],
  [993, 524, 134, 2, WALL],
  [507, 526, 631, 9, "#004680"],
  [732, 0, 28, 124, "#78aefc"],
  [734, 0, 24, 124, "#126fff"],
  [737, 148, 28, 367, "#78aefc"],
  [739, 148, 24, 366, "#126fff"],
  [720, 123, 41, 51, VIOLET],
  [715, 484, 41, 41, VIOLET],
  [741, 339, 15, 21, VIOLET],
  [740, 325, 12, 12, "#00ff00"],
];

function Beacon({ y }: { y: number }) {
  return (
    <g>
      <path d={`M738 ${y}L758 ${y - 11}v22z`} fill="#ffff00" />
      <rect x="740" y={y - 6} width="12" height="12" fill="#00ff00" />
    </g>
  );
}

function AxisBubble({ x, y, text }: { x: number; y: number; text: string }) {
  return (
    <g>
      <circle cx={x} cy={y} r="12" fill="none" stroke="#008000" />
      <text x={x} y={y + 6} fill="white" fontSize="18" textAnchor="middle">
        {text}
      </text>
    </g>
  );
}

function Drawing() {
  return (
    <svg className="block h-full w-full bg-black" shapeRendering="crispEdges">
      {SHAPES.map(([x, y, w, h, fill], i) => (
        <rect key={i} x={x} y={y} width={w} height={h} fill={fill} />
      ))}
      <path
        d="M507 148.500h598M507 504.500h631M735.500 0v828M317.500 535v293"
        stroke="#f00000"
        fill="none"
      />
      <Beacon y={148} />
      <Beacon y={515} />
      <path d="M162.500 535v293" stroke={FOREST} />
      <path d="M240.500 535v293" stroke="#007000" />
      <g fontSize="11" fill="#a6a6a6">
        <text x="751" y="97">
          <tspan fill="#f08c1e">9</tspan>E25 7/2
        </text>
        <text transform="translate(731 219) rotate(-90)">6E25 4/2</text>
        <text transform="translate(731 351) rotate(-90)">6E25 4/2</text>
        <text transform="translate(711 379) rotate(-90)">
          N<tspan fill="#e632c8">6E</tspan>14
        </text>
        <text transform="translate(776 342) rotate(-90)">5E25</text>
        <text transform="translate(792 368) rotate(-90)">
          <tspan fill="#e632c8">3</tspan>00*800 N6E12
        </text>
      </g>
      <AxisBubble x={735} y={12} text="3-2" />
      <AxisBubble x={1126} y={504} text="3-q" />
      <AxisBubble x={318} y={831} text="3-1" />
      <AxisBubble x={736} y={831} text="3-2" />
      <text transform="translate(208 733) rotate(-90)" fill="white" fontSize="17">
        8100
      </text>
      <g shapeRendering="auto">
        <path d="M48 790v-15h-4l6-12 6 12h-4v15z" fill="#00ff00" />
        <path d="M54 791h14v-4l12 6-12 6v-4H54z" fill="#ff0000" />
        <circle cx="50" cy="793" r="6" fill="#0000c8" />
        <text x="50" y="763" fill="#00ff00" fontSize="16" textAnchor="middle">
          Y
        </text>
        <text x="86" y="799" fill="#ff0000" fontSize="16" textAnchor="middle">
          X
        </text>
      </g>
    </svg>
  );
}

const CUBE = "M1 6h14v14H1zM1 6l5-5h14l-5 5M20 1v14l-5 5";

function ViewButton({ label, children }: { label: string; children: ReactNode }) {
  return (
    <button type="button" aria-label={label} className="flex h-[29px] items-center justify-center">
      <svg viewBox="0 0 21 21" className="h-[21px] w-[21px]" fill="none" stroke="#4a5163">
        {children}
      </svg>
    </button>
  );
}

function ViewToolbar() {
  return (
    <div className="absolute top-0 right-0 flex h-[246px] w-[33px] flex-col items-center rounded-r-[3px] border border-[#d6d6d6] bg-white pt-2 pr-0.5">
      <ViewButton label="动态观察">
        <circle cx="10.500" cy="10.500" r="9" />
        <path d="M15 2c3-1 5-1 5 1 0 5-8 13-15 13-3 0-4-1-4-3s0-2 1-4" stroke={BLUE} />
      </ViewButton>
      <ViewButton label="三维">
        <path d={CUBE} />
        <text x="3" y="17" fill={BLUE} stroke="none" fontSize="7" className="font-bold">
          3D
        </text>
      </ViewButton>
      <ViewButton label="俯视">
        <path d={CUBE} />
        <path d="M1 6l5-5h14l-5 5z" fill={PALE} stroke={BLUE} />
      </ViewButton>
      <Caret className="my-[3px] text-[#4a5163]" />
      <ViewButton label="实体">
        <path d="M1 6l5-5h14v14l-5 5H1z" fill={PALE} stroke="none" />
        <path d={CUBE} stroke={BLUE} />
      </ViewButton>
      <Caret className="my-[3px] text-[#4a5163]" />
      <ViewButton label="全屏">
        <path d="M1 7V1h6M14 1h6v6M20 14v6h-6M7 20H1v-6" strokeWidth="1.500" />
      </ViewButton>
      <ViewButton label="选中显示">
        <rect x="1" y="1" width="19" height="19" rx="1" strokeDasharray="3 1" />
        <path d="M10.500 5l5 3v6l-5 3-5-3V8zM5.500 8l5 3 5-3M10.500 11v6" stroke={BLUE} />
      </ViewButton>
      <div className="my-0.5 h-px w-[23px] shrink-0 bg-[#555]" />
      <ViewButton label="显示设置">
        <path d="M10 20H1V1h19v9M4 6h3M8 6h8M4 10h5M10 10h4M4 14h5" />
        <path d="M11 17q5-5 9 0-4 4-9 0z" stroke={BLUE} />
        <circle cx="15.500" cy="17" r="1" stroke={BLUE} />
      </ViewButton>
    </div>
  );
}

function Splitter({ right, className }: { right?: boolean; className: string }) {
  return (
    <div className={clsx("shrink-0 bg-white pt-[372px]", className)}>
      <div className="flex h-[100px] items-center bg-[#5c6773]">
        <svg viewBox="0 0 4 6" className="h-1.5 w-1" fill="#c8ccd2">
          <path d={right ? "M0 0l3 3-3 3z" : "M4 0L1 3l3 3z"} />
        </svg>
      </div>
    </div>
  );
}

function SidePanel() {
  return (
    <aside className="flex w-3 shrink-0 flex-col overflow-hidden border-l border-[#c4c4c4] bg-white">
      <div className="h-[13px] shrink-0 border-y border-[#d6d6d6] bg-[#e6e6e6]" />
      <div className="h-[22px] shrink-0 border-b border-[#d6d6d6] bg-[#f1f1f1] pl-[9px] leading-[21px]">
        属
      </div>
      <div className="mt-1 ml-0.5 h-[22px] w-5 shrink-0 rounded-tl border-t border-l border-[#c4c4c4] pt-1.5 pl-[7px]">
        <div className="h-2.5 w-2.5 border border-[#1a73e8]" />
      </div>
      <div className="ml-0.5 flex-1 border-l border-[#c4c4c4]">
        {Array.from({ length: 34 }, (_, i) => (
          <div key={i} className="flex h-[21px] items-center border-b border-[#dedede]">
            {i === 1 && (
              <svg viewBox="0 0 12 12" className="ml-0.5 h-3 w-3 shrink-0" fill="none" stroke="#777">
                <path d="M.5.5h11v11H.5zM3 6h6" />
              </svg>
            )}
          </div>
        ))}
      </div>
    </aside>
  );
}

export default function App() {
  return (
    <div className="flex h-screen flex-col overflow-hidden bg-[#f1f1f1] font-['Open_Sans','Noto_Sans_CJK_SC',sans-serif] text-xs text-[#333]">
      <MenuBar />
      <Ribbon />
      <ContextBar />
      <main className="flex min-h-0 flex-1">
        <NavPanel />
        <div className="ml-1 flex w-[280px] shrink-0 flex-col">
          <ComponentPanel />
          <PropertyPanel />
        </div>
        <Splitter className="w-1" />
        <div className="relative min-w-0 flex-1">
          <Drawing />
          <ViewToolbar />
          <ErrorDialog />
        </div>
        <Splitter right className="w-[5px] pr-px" />
        <SidePanel />
      </main>
    </div>
  );
}
